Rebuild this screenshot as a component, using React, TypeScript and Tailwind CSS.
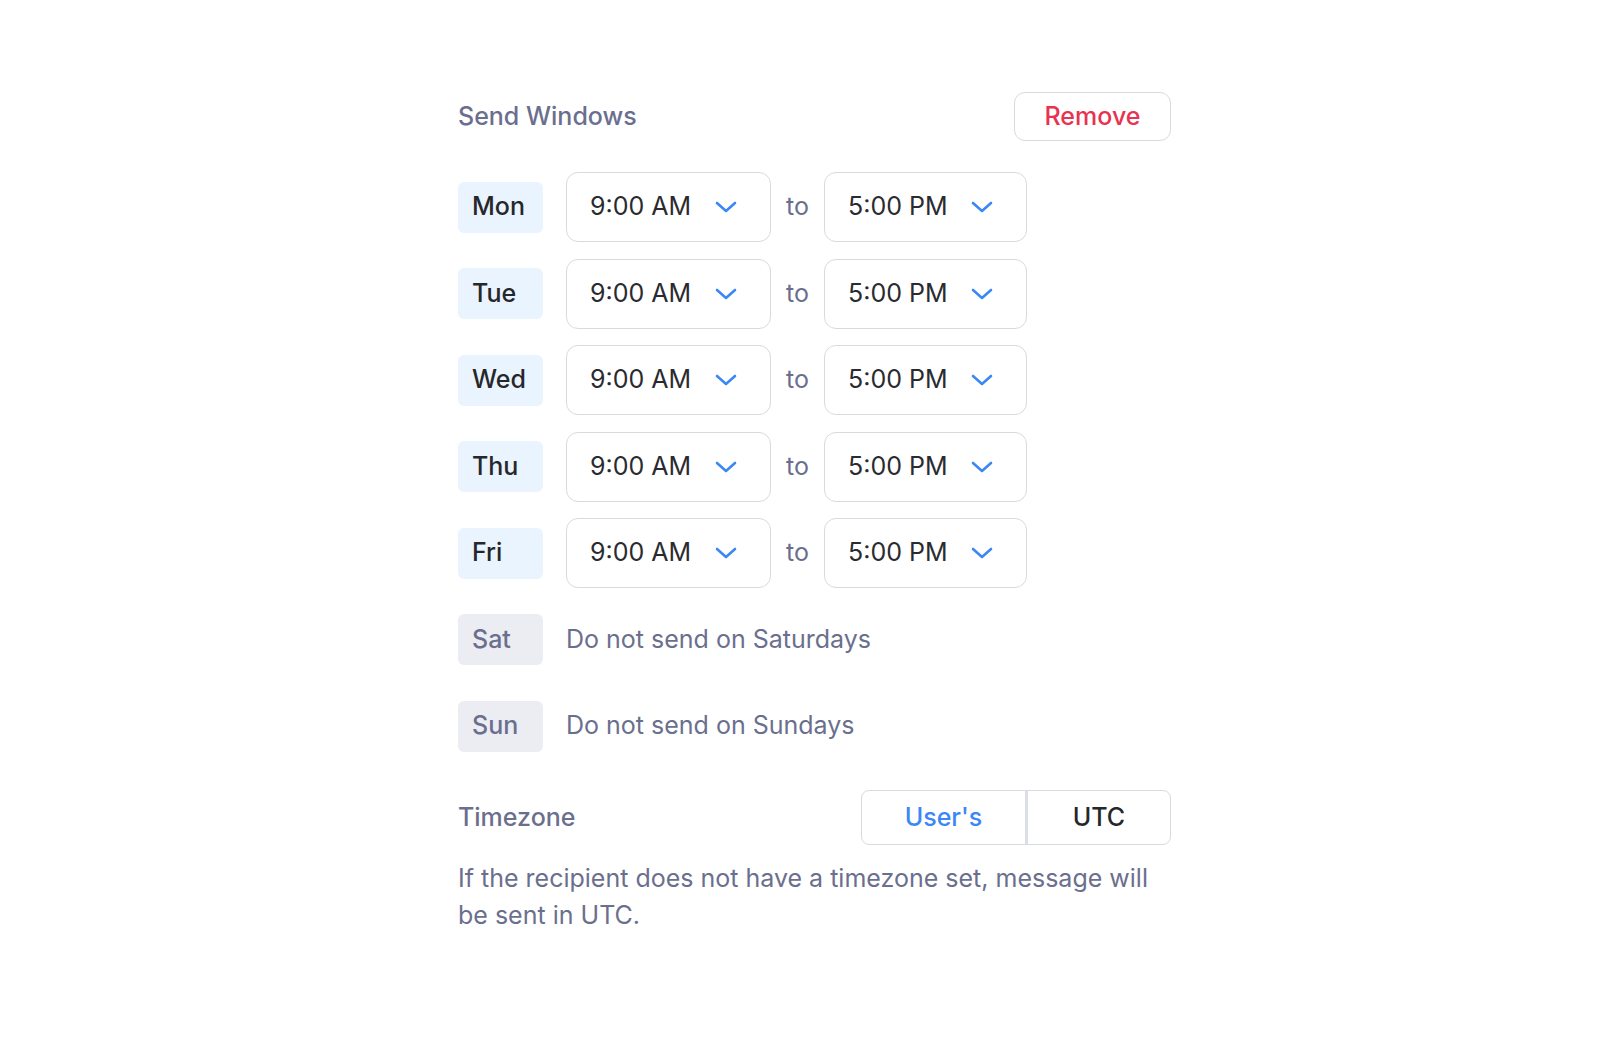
const weekdays = ["Mon", "Tue", "Wed", "Thu", "Fri"];

function Chevron() {
  return (
    <svg width="22" height="14" viewBox="0 0 22 14" fill="none" className="shrink-0">
      <polyline
        points="2 3 11 11 20 3"
        stroke="#3b87f5"
        strokeWidth="2.6"
        strokeLinecap="round"
        strokeLinejoin="round"
      />
    </svg>
  );
}

function TimeSelect({ value, width }: { value: string; width: string }) {
  return (
    <div
      className={`${width} h-[70px] flex items-center justify-between pl-[23px] pr-[33px] rounded-[12px] border-[1.5px] border-[#d8dae2] bg-white text-[25px] text-[#2a2b30]`}
    >
      <span>{value}</span>
      <Chevron />
    </div>
  );
}

function DayLabel({ day, off }: { day: string; off?: boolean }) {
  return (
    <div
      className={
        off
          ? "w-[85px] h-[51px] shrink-0 rounded-[6px] bg-[#ececf3] flex items-center pl-[14px] text-[25px] font-medium text-[#6b6f8e]"
          : "w-[85px] h-[51px] shrink-0 rounded-[6px] bg-[#eaf4fe] flex items-center pl-[14px] text-[25px] font-medium text-[#26272b]"
      }
    >
      {day}
    </div>
  );
}

export default function App() {
  return (
    <div className="w-screen h-screen overflow-hidden bg-white font-['Inter',_'Liberation_Sans',_sans-serif]">
      <div className="ml-[458px] w-[713px] pt-[92px]">
        <div className="flex items-center justify-between h-[49px]">
          <div className="text-[25px] font-medium text-[#6b6f8e]">Send Windows</div>
          <button className="h-[49px] w-[157px] rounded-[11px] border-[1.5px] border-[#d8dae2] bg-white text-[25px] font-medium text-[#e8324f]">
            Remove
          </button>
        </div>

        <div className="mt-[31px] flex flex-col gap-[16.5px]">
          {weekdays.map((d) => (
            <div key={d} className="flex items-center h-[70px]">
              <DayLabel day={d} />
              <div className="ml-[23px]">
                <TimeSelect value="9:00 AM" width="w-[205px]" />
              </div>
              <div className="w-[53px] text-center text-[25px] text-[#6b6f8e]">to</div>
              <TimeSelect value="5:00 PM" width="w-[203px]" />
            </div>
          ))}
          <div className="flex items-center h-[70px]">
            <DayLabel day="Sat" off />
            <div className="ml-[23px] text-[25px] text-[#6b6f8e]">Do not send on Saturdays</div>
          </div>
          <div className="flex items-center h-[70px]">
            <DayLabel day="Sun" off />
            <div className="ml-[23px] text-[25px] text-[#6b6f8e]">Do not send on Sundays</div>
          </div>
        </div>

        <div className="mt-[29px] flex items-center justify-between">
          <div className="text-[25px] font-medium text-[#6b6f8e]">Timezone</div>
          <div className="flex h-[55px] rounded-[8px] border-[1.5px] border-[#d8dae2] overflow-hidden">
            <div className="w-[166px] flex items-center justify-center text-[25px] font-medium text-[#3b87f5] border-r-[3px] border-[#dcdee5]">
              User's
            </div>
            <div className="w-[142px] flex items-center justify-center text-[25px] font-medium text-[#26272b]">
              UTC
            </div>
          </div>
        </div>

        <p className="mt-[15px] text-[25px] leading-[37px] text-[#6b6f8e]">
          If the recipient does not have a timezone set, message will be sent in UTC.
        </p>
      </div>
    </div>
  );
}
